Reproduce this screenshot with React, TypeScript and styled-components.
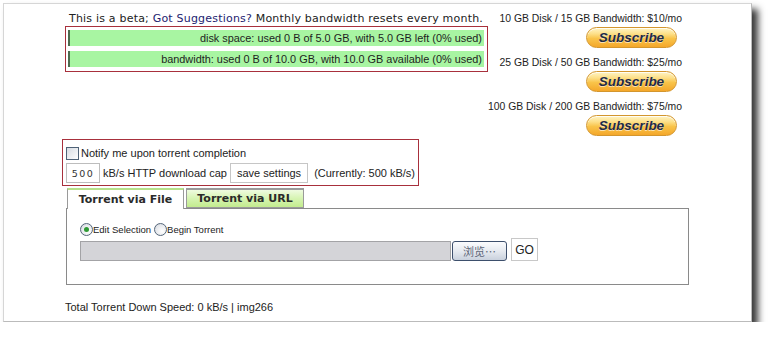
import React from "react";
import styled, { createGlobalStyle } from "styled-components";

const Global = createGlobalStyle`
  html, body { margin: 0; padding: 0; background: #ffffff; }
  body { font-family: "Liberation Sans", Arial, sans-serif; font-size: 11px; color: #222; }
  * { box-sizing: border-box; }
`;

const Panel = styled.div`
  margin: 3px 0 0 3px;
  width: 749px;
  height: 319px;
  background: #fff;
  border: 1px solid #d6d6d6;
  border-right-color: #bbb;
  border-bottom-color: #bbb;
  box-shadow: 6px 6px 7px rgba(0, 0, 0, 0.78);
  padding: 8px 0 0 58px;
`;

const TopRow = styled.div`
  display: flex;
  align-items: flex-start;
`;

const LeftCol = styled.div`
  width: 425px;
  padding-left: 3px;
  display: flex;
  flex-direction: column;
`;

const BetaLine = styled.div`
  font-family: "DejaVu Sans", Verdana, sans-serif;
  font-size: 11px;
  letter-spacing: 0.2px;
  line-height: 14px;
  height: 14px;
  padding-left: 4px;
  white-space: nowrap;
  color: #222;
`;

const Link = styled.a`
  color: #1d2370;
  text-decoration: none;
`;

const UsageBox = styled.div`
  width: 423px;
  border: 1px solid #a8303c;
  padding: 3px 3px 4px 2px;
  display: flex;
  flex-direction: column;
  gap: 5px;
`;

const UsageBar = styled.div`
  height: 16px;
  background: #a8f5a2;
  border-left: 2px solid #4e6a4e;
  text-align: right;
  padding-right: 2px;
  line-height: 16px;
  font-size: 10.9px;
  white-space: nowrap;
  color: #1e1e1e;
`;

const RightCol = styled.div`
  width: 195px;
  display: flex;
  flex-direction: column;
  align-items: flex-end;
  gap: 8px;
`;

const Plan = styled.div`
  display: flex;
  flex-direction: column;
  align-items: flex-end;
`;

const PlanText = styled.div`
  font-size: 10.4px;
  line-height: 14px;
  height: 14px;
  white-space: nowrap;
  color: #222;
`;

const SubscribeButton = styled.button`
  margin-top: 1px;
  margin-right: 5px;
  width: 91px;
  height: 21px;
  border-radius: 11px;
  border: 1px solid #d3962e;
  background: linear-gradient(#fff4c6 0%, #fde08a 30%, #f9c44a 55%, #f4a72a 100%);
  box-shadow: inset 0 1px 0 rgba(255, 255, 255, 0.8);
  font-family: "Liberation Sans", Arial, sans-serif;
  font-weight: bold;
  font-style: italic;
  font-size: 13.5px;
  color: #1f2a48;
  text-shadow: 0 1px 0 rgba(255, 255, 255, 0.6);
  padding: 0;
  cursor: pointer;
`;

const SettingsBox = styled.div`
  margin-top: 3px;
  width: 357px;
  height: 47px;
  border: 1px solid #a8303c;
  padding: 5px 3px 2px 3px;
  display: flex;
  flex-direction: column;
  gap: 2px;
`;

const Row = styled.div<{ $gap?: number }>`
  display: flex;
  align-items: center;
  gap: ${(p) => p.$gap ?? 0}px;
  white-space: nowrap;
`;

const CheckRow = styled(Row)`
  height: 16px;
`;

const CheckBox = styled.span`
  display: inline-block;
  width: 13px;
  height: 13px;
  border: 1px solid #4f6277;
  background: linear-gradient(135deg, #d6dbe2 0%, #eef0f3 60%, #ffffff 100%);
  margin-right: 2px;
`;

const Label = styled.span<{ $offset?: number }>`
  font-size: 11px;
  color: #222;
  margin-left: ${(p) => p.$offset ?? 0}px;
`;

const NumberInput = styled.span`
  display: inline-flex;
  align-items: center;
  justify-content: center;
  width: 36px;
  height: 20px;
  border: 1px solid #bdbdbd;
  font-family: "DejaVu Sans", Verdana, sans-serif;
  font-size: 9.5px;
  letter-spacing: 1.5px;
  color: #333;
`;

const PlainButton = styled.button`
  height: 20px;
  border: 1px solid #c6c6c6;
  background: #fff;
  font-family: "Liberation Sans", Arial, sans-serif;
  font-size: 11px;
  color: #222;
  padding: 0 6px;
`;

const Tabs = styled.div`
  margin-top: 2px;
  margin-left: 5px;
  display: flex;
  gap: 2px;
  height: 21px;
  position: relative;
  z-index: 1;
`;

const Tab = styled.div<{ $active?: boolean }>`
  width: ${(p) => (p.$active ? 117 : 118)}px;
  height: ${(p) => (p.$active ? 21 : 20)}px;
  border: 1px solid #9a9a9a;
  border-bottom: ${(p) => (p.$active ? "none" : "1px solid #9a9a9a")};
  border-top: 2px solid ${(p) => (p.$active ? "#b6e08a" : "#9a9a9a")};
  background: ${(p) =>
    p.$active ? "#ffffff" : "linear-gradient(#effbe0 0%, #d6f4b2 50%, #c3ec8e 100%)"};
  font-family: "DejaVu Sans", Verdana, sans-serif;
  font-weight: bold;
  font-size: 11px;
  color: #2a2a2a;
  display: flex;
  align-items: center;
  justify-content: center;
  white-space: nowrap;
`;

const TabPanel = styled.div`
  margin-left: 4px;
  margin-top: -1px;
  width: 623px;
  height: 77px;
  border: 1px solid #8a8a8a;
  padding: 13px 0 0 13px;
  display: flex;
  flex-direction: column;
  gap: 3px;
`;

const RadioRow = styled(Row)`
  height: 14px;
`;

const Radio = styled.span<{ $checked?: boolean }>`
  display: inline-flex;
  align-items: center;
  justify-content: center;
  width: 13px;
  height: 13px;
  border-radius: 50%;
  border: 1px solid #54667a;
  background: radial-gradient(circle at 65% 65%, #ffffff 0%, #e6e8ec 60%, #cfd4da 100%);
  &::after {
    content: "";
    display: ${(p) => (p.$checked ? "block" : "none")};
    width: 5px;
    height: 5px;
    border-radius: 50%;
    background: #2e9a34;
  }
`;

const SmallLabel = styled.span`
  font-family: "Liberation Sans", Arial, sans-serif;
  font-size: 9.5px;
  color: #222;
  margin-right: 3px;
`;

const FileRow = styled(Row)`
  align-items: flex-end;
  height: 22px;
`;

const FileField = styled.span`
  display: inline-block;
  width: 371px;
  height: 20px;
  background: #d4d4d8;
  border: 1px solid #a3a3a6;
`;

const BrowseButton = styled.button`
  width: 55px;
  height: 20px;
  margin-left: 1px;
  border: 1px solid #3d4f6c;
  border-radius: 3px;
  background: linear-gradient(#fbfcfe 0%, #e6eaf0 50%, #c9d1dd 100%);
  font-family: "Noto Sans CJK SC", "Liberation Sans", sans-serif;
  font-size: 11px;
  color: #5d6678;
  padding: 0;
  line-height: 1;
`;

const GoButton = styled.button`
  width: 27px;
  height: 23px;
  margin-left: 4px;
  border: 1px solid #c8c8c8;
  background: #fff;
  font-family: "Liberation Sans", Arial, sans-serif;
  font-size: 12px;
  color: #222;
  padding: 0;
`;

const Footer = styled.div`
  margin-top: 15px;
  margin-left: 3px;
  font-size: 11px;
  line-height: 14px;
  color: #222;
  white-space: nowrap;
`;

const plans = [
  "10 GB Disk / 15 GB Bandwidth: $10/mo",
  "25 GB Disk / 50 GB Bandwidth: $25/mo",
  "100 GB Disk / 200 GB Bandwidth: $75/mo",
];

export default function App() {
  return (
    <>
      <Global />
      <Panel>
        <TopRow>
          <LeftCol>
            <BetaLine>
              This is a beta; <Link href="#">Got Suggestions?</Link> Monthly bandwidth resets every month.
            </BetaLine>
            <UsageBox>
              <UsageBar>disk space: used 0 B of 5.0 GB, with 5.0 GB left (0% used)</UsageBar>
              <UsageBar>bandwidth: used 0 B of 10.0 GB, with 10.0 GB available (0% used)</UsageBar>
            </UsageBox>
          </LeftCol>
          <RightCol>
            {plans.map((p) => (
              <Plan key={p}>
                <PlanText>{p}</PlanText>
                <SubscribeButton>Subscribe</SubscribeButton>
              </Plan>
            ))}
          </RightCol>
        </TopRow>

        <SettingsBox>
          <CheckRow>
            <CheckBox />
            <Label>Notify me upon torrent completion</Label>
          </CheckRow>
          <Row $gap={3}>
            <NumberInput>500</NumberInput>
            <Label>kB/s HTTP download cap</Label>
            <PlainButton>save settings</PlainButton>
            <Label $offset={3}>(Currently: 500 kB/s)</Label>
          </Row>
        </SettingsBox>

        <Tabs>
          <Tab $active>Torrent via File</Tab>
          <Tab>Torrent via URL</Tab>
        </Tabs>
        <TabPanel>
          <RadioRow>
            <Radio $checked />
            <SmallLabel>Edit Selection</SmallLabel>
            <Radio />
            <SmallLabel>Begin Torrent</SmallLabel>
          </RadioRow>
          <FileRow>
            <FileField />
            <BrowseButton>浏览…</BrowseButton>
            <GoButton>GO</GoButton>
          </FileRow>
        </TabPanel>

        <Footer>Total Torrent Down Speed: 0 kB/s | img266</Footer>
      </Panel>
    </>
  );
}
